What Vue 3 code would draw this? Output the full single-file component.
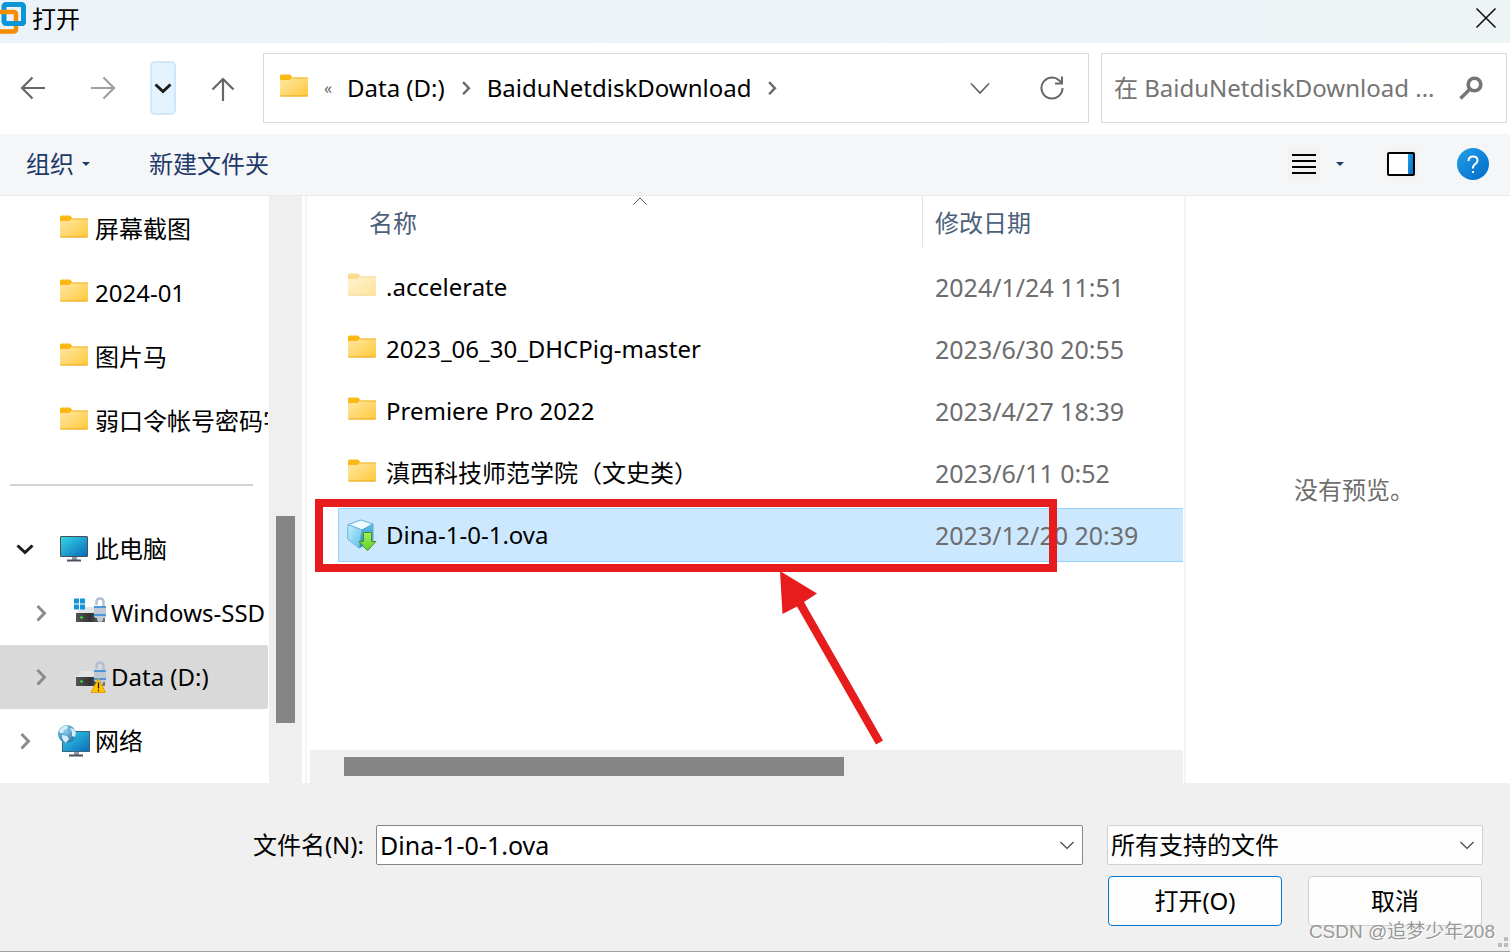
<script setup>
import { ref } from 'vue'

const places = [
  { name: '屏幕截图', icon: 'folder' },
  { name: '2024-01', icon: 'folder' },
  { name: '图片马', icon: 'folder' },
  { name: '弱口令帐号密码字典', icon: 'folder' },
]
const devices = [
  { name: '此电脑', icon: 'pc', open: true },
  { name: 'Windows-SSD (C:)', icon: 'drive-win', child: true },
  { name: 'Data (D:)', icon: 'drive-warn', child: true, active: true },
  { name: '网络', icon: 'network' },
]
const files = [
  { name: '.accelerate', date: '2024/1/24 11:51', faded: true },
  { name: '2023_06_30_DHCPig-master', date: '2023/6/30 20:55' },
  { name: 'Premiere Pro 2022', date: '2023/4/27 18:39' },
  { name: '滇西科技师范学院（文史类）', date: '2023/6/11 0:52' },
  { name: 'Dina-1-0-1.ova', date: '2023/12/20 20:39', ova: true, selected: true },
]
const fileName = ref('Dina-1-0-1.ova')
</script>

<template>
  <svg class="defs" width="0" height="0" aria-hidden="true">
    <defs>
      <linearGradient id="gFolder" x1="0" y1="0" x2="1" y2="1">
        <stop offset="0" stop-color="#ffe9a6" /><stop offset="1" stop-color="#ffc83a" />
      </linearGradient>
      <linearGradient id="gScreen" x1="0" y1="0" x2="1" y2="1">
        <stop offset="0" stop-color="#35d8e4" /><stop offset="1" stop-color="#0a68bd" />
      </linearGradient>
      <linearGradient id="gDrive" x1="0" y1="0" x2="1" y2="0">
        <stop offset="0" stop-color="#555" /><stop offset="0.5" stop-color="#333" /><stop offset="1" stop-color="#777" />
      </linearGradient>
      <linearGradient id="gHelp" x1="0" y1="0" x2="1" y2="1">
        <stop offset="0" stop-color="#1fa2ea" /><stop offset="1" stop-color="#0469c8" />
      </linearGradient>
      <radialGradient id="gGlobe" cx="0.4" cy="0.3" r="0.8">
        <stop offset="0" stop-color="#8fd0ec" /><stop offset="1" stop-color="#1d6da5" />
      </radialGradient>
      <linearGradient id="gCube" x1="0" y1="0" x2="1" y2="1">
        <stop offset="0" stop-color="#c4effd" /><stop offset="1" stop-color="#5cc0e8" />
      </linearGradient>
      <linearGradient id="gCubeSide" x1="0" y1="0" x2="0" y2="1">
        <stop offset="0" stop-color="#5fc2ea" /><stop offset="1" stop-color="#2584c0" />
      </linearGradient>
      <linearGradient id="gArrow" x1="0" y1="0" x2="0" y2="1">
        <stop offset="0" stop-color="#a6ee5c" /><stop offset="1" stop-color="#5fd02c" />
      </linearGradient>
      <symbol id="folder" viewBox="0 2 32 32">
        <path d="M2 6a1.500 1.500 0 0 1 1.500-1.500h8.500l2 2v3.500l-2 2H2z" fill="#fbb917" />
        <path d="M2 11.500q0-1.500 1.500-1.500h8l2.500-2.500H29q1 0 1 1V25.500q0 1-1 1H3q-1 0-1-1z" fill="url(#gFolder)" />
        <path d="M14 8H30" stroke="#f0b429" stroke-width="1" />
        <path d="M2.500 26H29.500" stroke="#e9a820" stroke-width="1" />
      </symbol>
      <symbol id="pc" viewBox="0 0 32 32">
        <rect x="2.500" y="3.500" width="27" height="20" rx="0.500" fill="url(#gScreen)" stroke="#4a4e57" />
        <path d="M14 24h5v3h-5z" fill="#9099a6" /><path d="M9 26.500h14v2H9z" fill="#4a505c" />
      </symbol>
      <symbol id="network" viewBox="0 0 32 32">
        <rect x="4.500" y="6.500" width="27" height="20" fill="url(#gScreen)" stroke="#3e6480" />
        <path d="M16 27h5v3h-5z" fill="#9099a6" /><path d="M11 29.500h14v2H11z" fill="#4a505c" />
        <circle cx="9" cy="9" r="9" fill="url(#gGlobe)" />
        <path d="M1 6Q5 0 10 1L9 4 6 5 5 8 2 8zM12 3l4 1 2 4-1 4-3-1 0-4zM4 10l5 1 2 3-3 4Q5 16 4 13z" fill="#d5edf5" />
      </symbol>
      <symbol id="drive" viewBox="0 0 32 32">
        <path d="M7 10h19l4 6H1z" fill="#e3e4e6" />
        <rect x="1" y="16" width="29" height="9" fill="url(#gDrive)" />
        <circle cx="6.500" cy="20.500" r="1.300" fill="#2bea3c" />
        <path d="M21.500 8V5q0-3.500 3.500-3.500t3.500 3.500v5" fill="none" stroke="#b4c1cd" stroke-width="2.500" />
        <path d="M19 9h12v10q0 2-3 2v2l-3 3-3-3v-2q-3 0-3-2z" fill="#bdc9d4" />
        <path d="M19 10h12M19 18h12" stroke="#2686d9" stroke-width="1.500" />
      </symbol>
      <symbol id="drive-win" viewBox="-1 0 32 32">
        <use href="#drive" width="32" height="32" />
        <path d="M-1 1.500h5v5h-5zM5 1.500h5v5H5zM-1 7.500h5v5h-5zM5 7.500h5v5H5z" fill="#1593db" />
      </symbol>
      <symbol id="drive-warn" viewBox="-1 0 32 32">
        <use href="#drive" width="32" height="32" />
        <path d="M23.500 17.500L30.500 31.500H16z" fill="#ffc400" stroke="#e79a12" stroke-linejoin="round" />
        <path d="M23.500 21.500v6M23.500 28.700v1.500" stroke="#222" stroke-width="1.300" />
      </symbol>
      <symbol id="ova" viewBox="0 0 32 32">
        <path d="M2 5.500L15 1l12 4-11 6z" fill="#eefaff" stroke="#60b5dc" stroke-linejoin="round" />
        <path d="M2 5.500l14 5.500-3 18L1.500 20z" fill="url(#gCube)" stroke="#6ab8dc" stroke-linejoin="round" />
        <path d="M16 11l11-6v17l-14 7z" fill="url(#gCubeSide)" stroke="#5aaad2" stroke-linejoin="round" />
        <path d="M17.500 13.500h8v9h4.500L21.500 31.500 13 22.500h4.500z" fill="url(#gArrow)" stroke="#43941f" />
      </symbol>
      <symbol id="chev-right" viewBox="0 0 24 24">
        <path d="M8.500 5L15.500 12.200 8.500 19.500" fill="none" stroke="currentColor" stroke-width="2.900" />
      </symbol>
      <symbol id="chev-down" viewBox="0 0 24 24">
        <path d="M4.500 8.500L12 15.500 19.500 8.500" fill="none" stroke="currentColor" stroke-width="3" />
      </symbol>
      <symbol id="chev-thin" viewBox="0 0 24 24">
        <path d="M5.500 9L12 15.500 18.500 9" fill="none" stroke="currentColor" stroke-width="1.200" />
      </symbol>
    </defs>
  </svg>

  <main class="dialog">
    <header class="title">
      <svg class="logo" viewBox="0 0 26 36" aria-hidden="true">
        <rect x="4" y="4.500" width="19.500" height="19" rx="2" fill="none" stroke="#0a96d6" stroke-width="5" />
        <path d="M-1 12H13.500Q16 12 16 14.500V29Q16 31.500 13.500 31.500H-1" fill="none" stroke="#f68b04" stroke-width="4.500" />
        <path d="M6.500 23.500H22Q23.500 23.500 23.500 22V16" fill="none" stroke="#0a96d6" stroke-width="5" />
      </svg>
      <h1>打开</h1>
      <button class="close" aria-label="关闭">
        <svg width="24" height="24" viewBox="0 0 24 24"><path d="M2.500 2.500l19 19M21.500 2.500l-19 19" stroke="#111" stroke-width="1.600" /></svg>
      </button>
    </header>

    <nav class="nav">
      <button class="arrow" aria-label="后退">
        <svg width="28" height="28" viewBox="0 0 28 28"><path d="M26 14H3M13.500 3.500L3 14l10.500 10.500" fill="none" stroke="#666" stroke-width="2.200" /></svg>
      </button>
      <button class="arrow" aria-label="前进">
        <svg width="28" height="28" viewBox="0 0 28 28"><path d="M2 14h23M14.500 3.500L25 14 14.500 24.500" fill="none" stroke="#a0a0a0" stroke-width="2.200" /></svg>
      </button>
      <button class="recent" aria-label="最近浏览的位置">
        <svg width="24" height="24"><use href="#chev-down" /></svg>
      </button>
      <button class="arrow" aria-label="上移">
        <svg width="28" height="28" viewBox="0 0 28 28"><path d="M14 27V5M3.500 15.500L14 5l10.500 10.500" fill="none" stroke="#666" stroke-width="2.200" /></svg>
      </button>
      <div class="address">
        <svg class="ico" width="32" height="32"><use href="#folder" /></svg>
        <span class="more">«</span>
        <a href="#">Data (D:)</a>
        <svg class="sep" width="20" height="20"><use href="#chev-right" /></svg>
        <a href="#">BaiduNetdiskDownload</a>
        <svg class="sep" width="20" height="20"><use href="#chev-right" /></svg>
        <button class="drop" aria-label="以前的位置">
          <svg width="24" height="24" viewBox="0 0 24 24"><path d="M3 7.500l9 9.500L21 7.500" fill="none" stroke="#666" stroke-width="1.800" /></svg>
        </button>
        <button aria-label="刷新">
          <svg width="28" height="28" viewBox="0 0 28 28"><path d="M24.500 14A10.500 10.500 0 1 1 21 6.200l3 3" fill="none" stroke="#666" stroke-width="2" /><path d="M24 2.500V9.500H17" fill="none" stroke="#666" stroke-width="2" /></svg>
        </button>
      </div>
      <label class="search">
        <input type="text" placeholder="在 BaiduNetdiskDownload ..." aria-label="搜索" />
        <svg width="26" height="26" viewBox="0 0 26 26"><circle cx="16.500" cy="9.500" r="6.300" fill="none" stroke="#747474" stroke-width="3.600" /><path d="M12 14L2.500 23.500" stroke="#747474" stroke-width="3.400" /></svg>
      </label>
    </nav>

    <div class="tools">
      <button>组织<svg width="8" height="4" viewBox="0 0 8 4"><path d="M0 0h8L4 4z" fill="#1e3a6a" /></svg></button>
      <button class="newdir">新建文件夹</button>
      <button class="view" aria-label="更改视图">
        <svg width="32" height="32" viewBox="0 0 32 32"><rect width="32" height="32" rx="3" fill="#f2f2f2" /><path d="M4 7h24M4 13h24M4 19h24M4 25h24" stroke="#000" stroke-width="2" /></svg>
      </button>
      <button class="viewmore" aria-label="更多选项"><svg width="8" height="4" viewBox="0 0 8 4"><path d="M0 0h8L4 4z" fill="#1e3a6a" /></svg></button>
      <button class="pane" aria-label="预览窗格">
        <svg width="32" height="32" viewBox="0 0 32 32"><rect width="32" height="32" rx="3" fill="#f2f2f2" /><rect x="3" y="5" width="26" height="22" rx="1" fill="#fff" stroke="#000" stroke-width="2" /><path d="M23 6h5v20h-5z" fill="url(#gHelp)" /></svg>
      </button>
      <button class="help" aria-label="帮助">
        <svg width="32" height="32" viewBox="0 0 32 32"><circle cx="16" cy="16" r="16" fill="url(#gHelp)" /><path d="M11.500 13Q11.500 8.500 16 8.500T20.500 12.500Q20.500 14.500 18 16.300T16 20.500" fill="none" stroke="#fff" stroke-width="2" /><path d="M15 23h2v2h-2z" fill="#fff" /></svg>
      </button>
    </div>

    <div class="body">
      <aside class="side">
        <ul>
          <li v-for="p in places" :key="p.name">
            <span class="chev"></span>
            <svg class="ico" width="32" height="32"><use :href="'#' + p.icon" /></svg>
            <span>{{ p.name }}</span>
          </li>
          <li class="rule"><hr /></li>
          <li v-for="d in devices" :key="d.name" :class="{ child: d.child, active: d.active }">
            <svg class="chev" :class="{ open: d.open }" width="24" height="24"><use :href="d.open ? '#chev-down' : '#chev-right'" /></svg>
            <svg class="ico" width="32" height="32"><use :href="'#' + d.icon" /></svg>
            <span>{{ d.name }}</span>
          </li>
        </ul>
      </aside>
      <div class="vbar"><div class="vthumb"></div></div>
      <section class="list">
        <table>
          <thead>
            <tr>
              <th class="cname"><div>名称<svg class="sort" width="14" height="8" viewBox="0 0 14 8"><path d="M0.500 7.500L7 1l6.500 6.500" fill="none" stroke="#555" /></svg></div></th>
              <th class="cdate"><div>修改日期</div></th>
            </tr>
          </thead>
          <tbody>
            <tr v-for="f in files" :key="f.name" :class="{ sel: f.selected }">
              <td>
                <div class="cell">
                  <svg :class="{ faded: f.faded }" width="32" height="32"><use :href="f.ova ? '#ova' : '#folder'" /></svg>
                  <span>{{ f.name }}</span>
                </div>
              </td>
              <td><div class="cell date">{{ f.date }}</div></td>
            </tr>
          </tbody>
        </table>
        <div class="hbar"><div class="hthumb"></div></div>
        <div class="mark"></div>
        <svg class="pointer" width="104" height="174" viewBox="0 0 104 174" aria-hidden="true">
          <path d="M0 0L37 22.500 24 31 103 169.500 96 173.500 17 35.500 2.500 43z" fill="#e71d1d" />
        </svg>
      </section>
      <section class="preview">没有预览。</section>
    </div>

    <footer class="foot">
      <div class="row">
        <label for="fname">文件名(N):</label>
        <div class="combo">
          <input id="fname" v-model="fileName" type="text" />
          <svg width="24" height="24"><use href="#chev-thin" /></svg>
        </div>
        <div class="combo type">
          <select aria-label="文件类型"><option>所有支持的文件</option></select>
          <svg width="24" height="24"><use href="#chev-thin" /></svg>
        </div>
      </div>
      <div class="actions">
        <button class="primary">打开(O)</button>
        <button>取消</button>
      </div>
      <span class="credit">CSDN @追梦少年208</span>
      <svg class="grip" width="10" height="10" viewBox="0 0 10 10" aria-hidden="true"><path d="M6 0h4v4H6zM0 6h4v4H0zM6 6h4v4H6z" fill="#bdbdbd" /></svg>
    </footer>
  </main>
</template>

<style>
body {
  margin: 0;
}
#app {
  min-height: 100vh;
  display: flex;
}
</style>

<style scoped>
.defs {
  position: absolute;
}
.dialog {
  flex: 1;
  min-width: 0;
  display: flex;
  flex-direction: column;
  background: #fff;
  color: #000;
  font: 24px/32px "Noto Sans", "Noto Sans CJK SC", sans-serif;
}
button,
input,
select {
  font: inherit;
  color: inherit;
  background: none;
  border: 0;
  margin: 0;
  padding: 0;
}
button {
  display: flex;
  align-items: center;
  justify-content: center;
  white-space: nowrap;
}
input {
  outline: 0;
}
svg {
  display: block;
  flex: none;
}
.title {
  height: 43px;
  display: flex;
  align-items: flex-start;
  background: linear-gradient(90deg, #ebf3f8, #eef3f6);
}
.logo {
  width: 26px;
  height: 36px;
}
h1 {
  margin: 3px 0 0 6px;
  font-size: 24px;
  font-weight: 400;
}
.close {
  margin: 6px 12px 0 auto;
}
.nav {
  display: flex;
  align-items: center;
  height: 91px;
  padding: 0 3px 1px 13px;
  box-sizing: border-box;
}
.arrow {
  width: 40px;
  height: 40px;
}
.arrow + .arrow {
  margin-left: 30px;
}
.recent {
  width: 26px;
  height: 54px;
  margin: 0 27px;
  border: 2px solid #cce8ff;
  border-radius: 5px;
  background: #e5f3ff;
  color: #1a1a1a;
}
.address {
  flex: 1;
  min-width: 0;
  height: 70px;
  margin: 0 12px 0 20px;
  padding: 0 22px 0 14px;
  box-sizing: border-box;
  border: 1px solid #d9d9d9;
  display: flex;
  align-items: center;
}
.address a {
  color: #000;
  text-decoration: none;
  white-space: nowrap;
}
.more {
  width: 23px;
  margin: 0 0 0 14px;
  font-size: 16px;
  color: #666;
}
.sep {
  margin: 0 11px;
  color: #6a6a6a;
}
.drop {
  margin: 0 46px 0 auto;
}
.search {
  width: 406px;
  height: 70px;
  padding: 0 22px 0 12px;
  box-sizing: border-box;
  border: 1px solid #d9d9d9;
  display: flex;
  align-items: center;
  gap: 12px;
}
.search input {
  flex: 1;
  min-width: 0;
}
.search input::placeholder {
  color: #747474;
  opacity: 1;
}
.tools {
  display: flex;
  align-items: center;
  height: 62px;
  padding: 0 21px 1px 26px;
  box-sizing: border-box;
  border-bottom: 1px solid #e6e8eb;
  background: #f5f6f8;
  color: #1e3a6a;
}
.tools button {
  gap: 8px;
}
.tools .newdir {
  margin-left: 59px;
}
.tools .view {
  margin-left: auto;
}
.viewmore {
  margin: 0 41px 0 16px;
}
.help {
  margin-left: 40px;
}
.body {
  flex: 1;
  display: flex;
}
.side {
  width: 269px;
  overflow: hidden;
}
ul {
  list-style: none;
  margin: 0;
  padding: 1px 0 0;
}
li {
  height: 64px;
  width: 268px;
  padding-left: 13px;
  box-sizing: border-box;
  display: flex;
  align-items: center;
  white-space: nowrap;
  overflow: hidden;
}
.rule {
  padding: 0 15px 0 10px;
}
hr {
  flex: 1;
  margin: 0;
  border: 0;
  border-top: 2px solid #d3d3d3;
}
.child {
  padding-left: 29px;
}
.active {
  background: #d9d9d9;
  border-radius: 0 2px 2px 0;
}
.chev {
  flex: none;
  width: 24px;
  margin-right: 21px;
  color: #8a8a8a;
}
.chev.open {
  color: #1a1a1a;
}
li .ico {
  margin-right: 5px;
}
.vbar {
  width: 33px;
  background: #efefef;
}
.vthumb {
  width: 19px;
  height: 207px;
  margin: 320px 0 0 7px;
  background: #858585;
}
.list {
  position: relative;
  flex: 1;
  min-width: 0;
  display: flex;
  flex-direction: column;
  justify-content: space-between;
  margin-left: 3px;
  border: solid #f5f5f5;
  border-width: 0 2px;
}
table {
  margin: 0 1px 0 31px;
  border-collapse: collapse;
  table-layout: fixed;
}
th,
td {
  padding: 0;
  font-weight: 400;
  text-align: left;
}
th {
  height: 60px;
  vertical-align: top;
  color: #4c607a;
}
th div {
  position: relative;
  height: 51px;
  padding: 11px 12px;
  box-sizing: border-box;
}
.cname div {
  margin-left: 19px;
}
.cdate {
  width: 261px;
}
.cdate div {
  border-left: 1px solid #e3e3e3;
}
.sort {
  position: absolute;
  top: 1px;
  left: calc(50% - 7px);
}
td {
  padding: 4px 0;
}
.cell {
  height: 54px;
  box-sizing: border-box;
  padding-left: 7px;
  display: flex;
  align-items: center;
  gap: 8px;
  border: solid transparent;
  border-width: 1px 0 1px 1px;
  white-space: nowrap;
}
.date {
  padding-left: 12px;
  font-size: 25px;
  color: #6d6d6d;
}
.sel .cell {
  background: #cce8ff;
  border-color: #99d1ff;
}
.sel .date {
  border-left-color: #cce8ff;
}
.faded {
  opacity: 0.5;
}
.hbar {
  height: 33px;
  margin: 0 1px 0 3px;
  background: #efefef;
  display: flex;
  align-items: center;
}
.hthumb {
  width: 500px;
  height: 19px;
  margin-left: 34px;
  background: #858585;
}
.mark {
  position: absolute;
  left: 8px;
  top: 303px;
  width: 742px;
  height: 73px;
  box-sizing: border-box;
  border: 8px solid #e71d1d;
}
.pointer {
  position: absolute;
  left: 473px;
  top: 375px;
}
.preview {
  width: 324px;
  padding-left: 12px;
  box-sizing: border-box;
  display: flex;
  align-items: center;
  justify-content: center;
  color: #6d6d6d;
}
.foot {
  position: relative;
  height: 169px;
  box-sizing: border-box;
  padding: 42px 27px 0 0;
  border-bottom: 1px solid #a0a0a0;
  background: #f0f0f0;
}
.row {
  display: flex;
  align-items: center;
}
.row label {
  width: 364px;
  margin-right: 12px;
  text-align: right;
}
.combo {
  position: relative;
  flex: 1;
  height: 40px;
  box-sizing: border-box;
  border: 1px solid #868686;
  border-radius: 2px;
  background: #fff;
  display: flex;
}
.combo.type {
  flex: none;
  width: 376px;
  margin-left: 24px;
  border-color: #d0d0d0;
  background: #fdfdfd;
}
.combo input,
.combo select {
  flex: 1;
  min-width: 0;
  padding: 0 36px 0 3px;
  appearance: none;
}
.combo input {
  font-size: 25px;
}
.combo svg {
  position: absolute;
  right: 3px;
  top: 7px;
  color: #444;
  pointer-events: none;
}
.actions {
  display: flex;
  justify-content: flex-end;
  gap: 26px;
  margin: 11px 1px 0 0;
}
.actions button {
  width: 174px;
  height: 50px;
  border: 1px solid #d0d0d0;
  border-radius: 4px;
  background: #fdfdfd;
}
.actions .primary {
  border-color: #0078d4;
}
.credit {
  position: absolute;
  right: 15px;
  bottom: 3px;
  font: 19px/32px "Liberation Sans", "Noto Sans CJK SC", sans-serif;
  color: #999;
  text-shadow: 1px 1px 0 #fff;
  white-space: nowrap;
}
.grip {
  position: absolute;
  right: 2px;
  bottom: 4px;
}
</style>
